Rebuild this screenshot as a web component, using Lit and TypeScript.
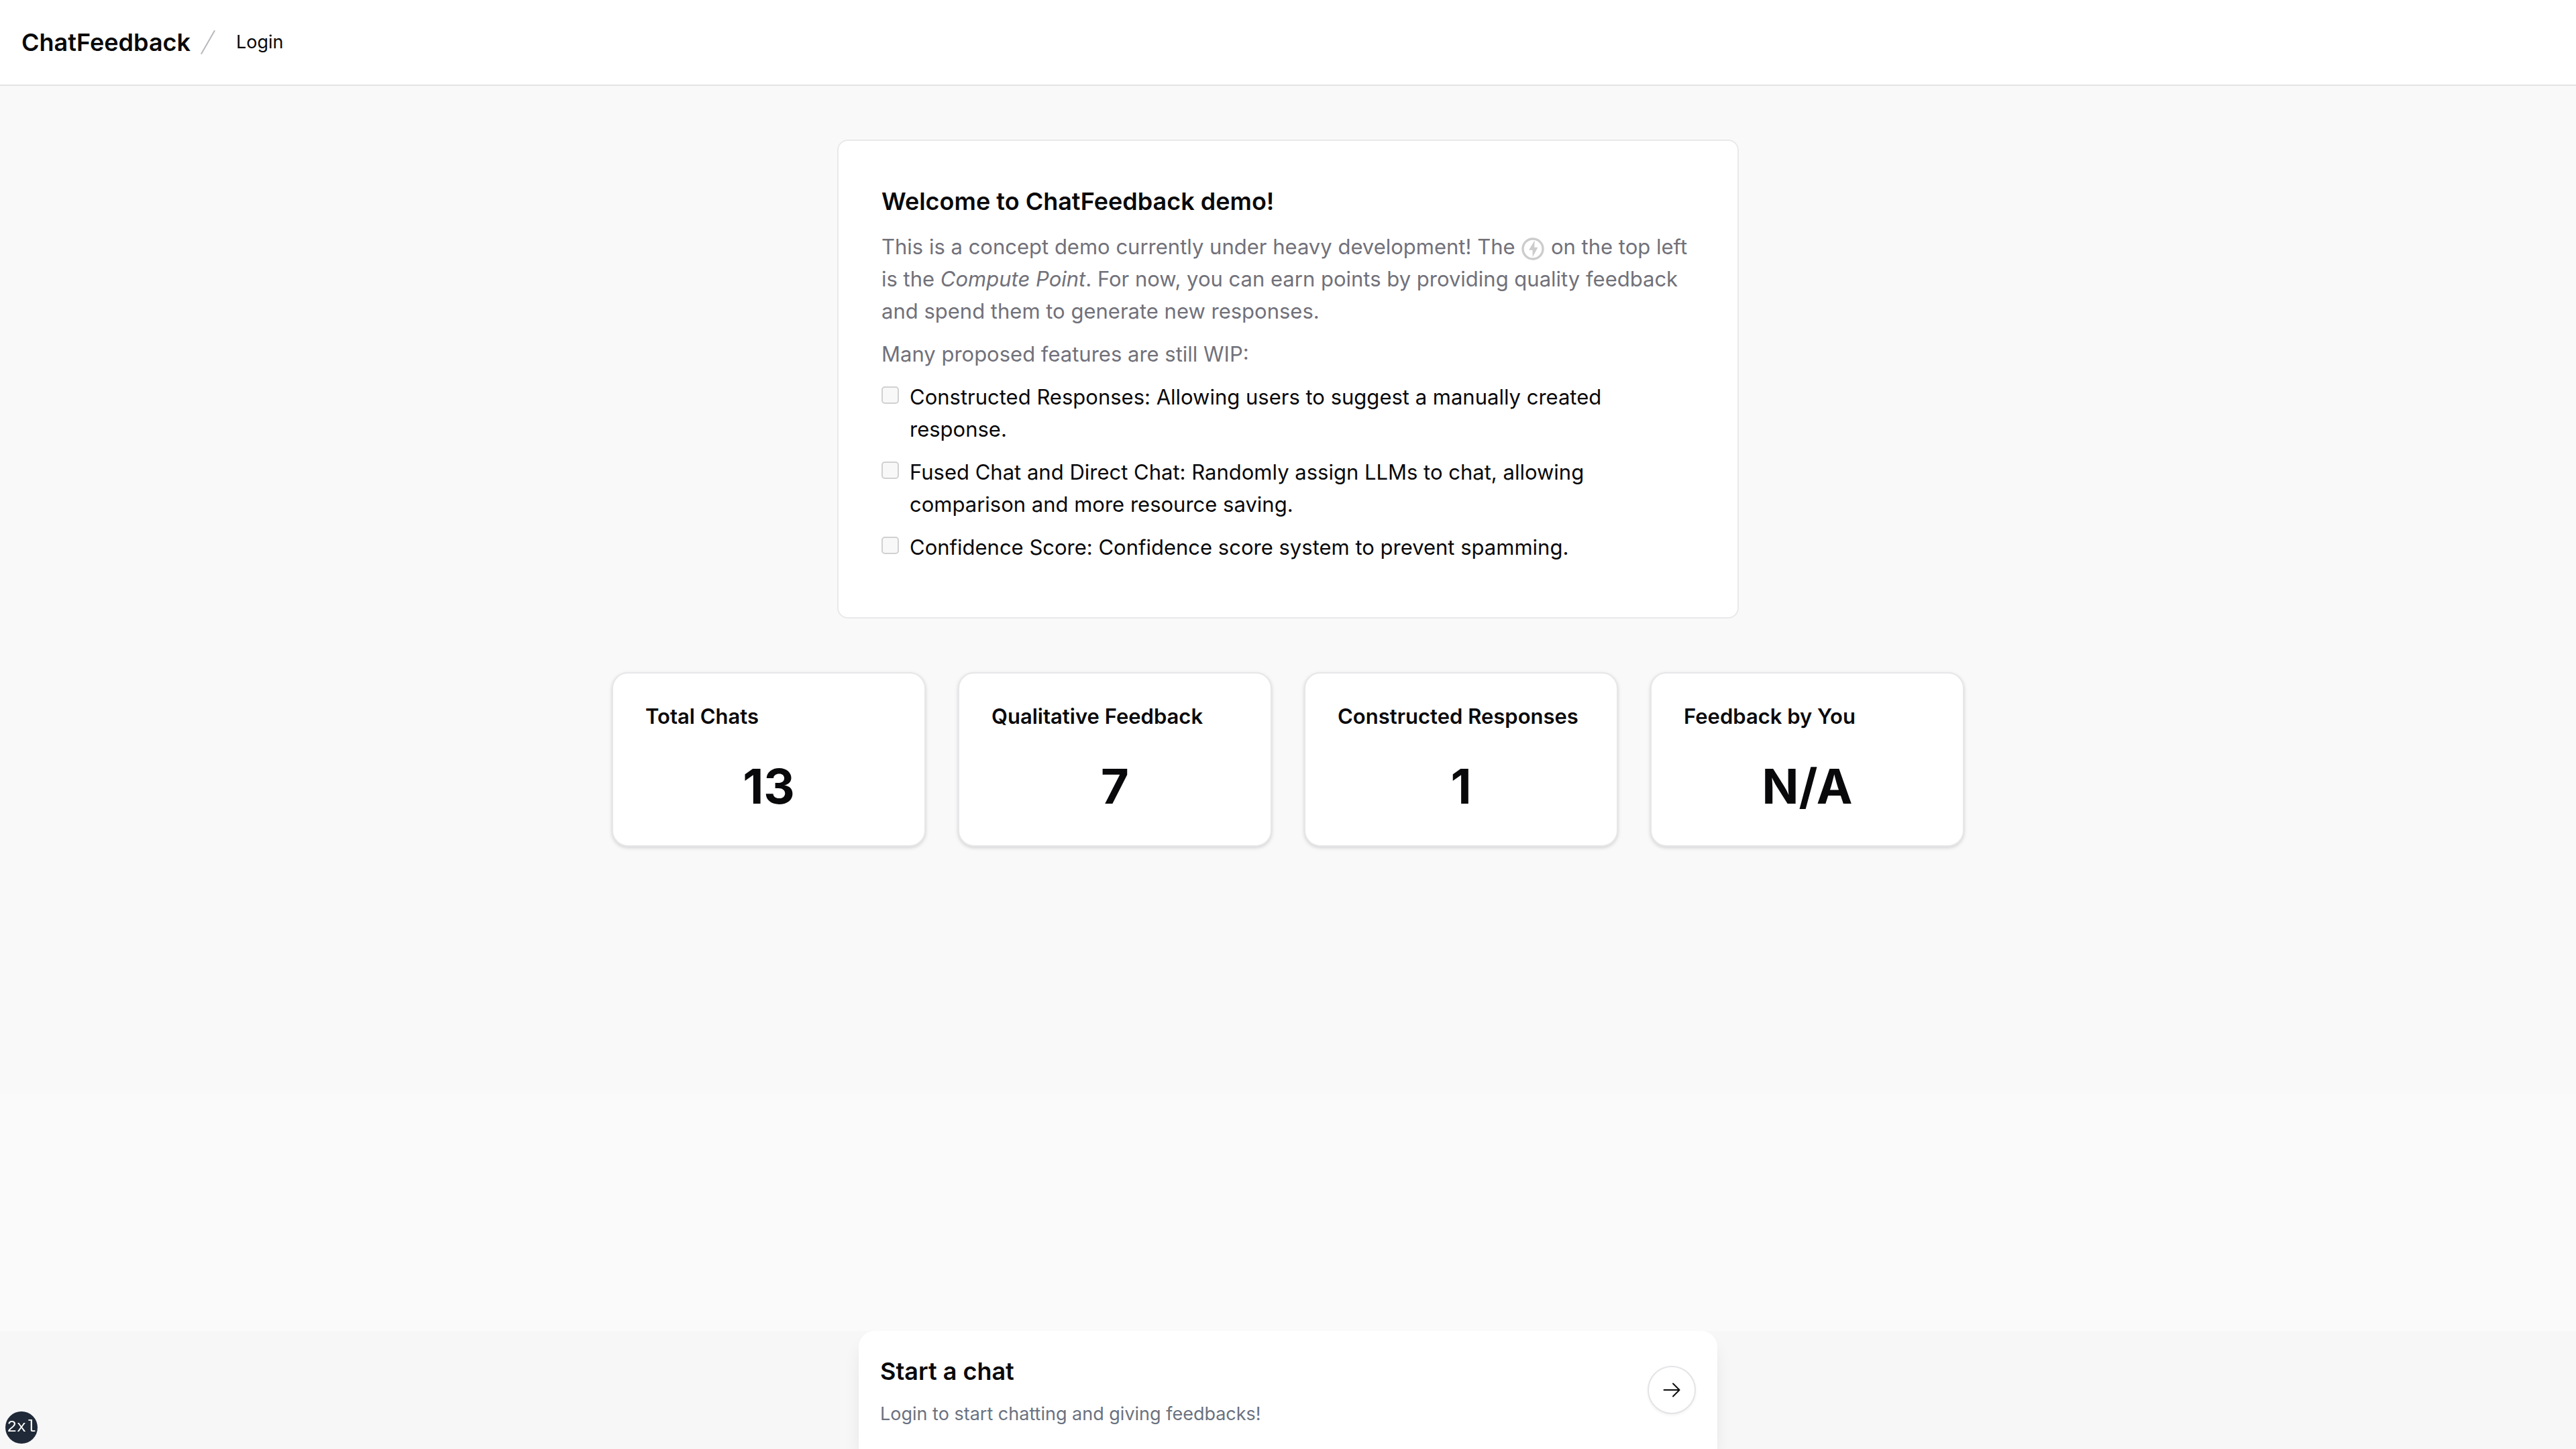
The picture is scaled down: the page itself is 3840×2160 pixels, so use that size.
import { LitElement, html, css } from "lit";
import { customElement, property } from "lit/decorators.js";

const features = [
  "Constructed Responses: Allowing users to suggest a manually created response.",
  "Fused Chat and Direct Chat: Randomly assign LLMs to chat, allowing comparison and more resource saving.",
  "Confidence Score: Confidence score system to prevent spamming.",
];

const stats = [
  { label: "Total Chats", value: "13" },
  { label: "Qualitative Feedback", value: "7" },
  { label: "Constructed Responses", value: "1" },
  { label: "Feedback by You", value: "N/A" },
];

@customElement("stat-card")
export class StatCard extends LitElement {
  @property() label = "";
  @property() value = "";

  static styles = css`
    :host {
      display: block;
      box-sizing: border-box;
      padding: 40px 48px 32px;
      background: #ffffff;
      border: 2px solid #e7e7e9;
      border-radius: 24px;
      box-shadow: 0 2px 6px rgba(0, 0, 0, 0.1), 0 2px 4px rgba(0, 0, 0, 0.06);
    }
    .label {
      margin: 0;
      font-size: 31px;
      line-height: 48px;
      font-weight: 600;
      white-space: nowrap;
    }
    .value {
      margin: 24px 0 0;
      font-size: 72px;
      line-height: 80px;
      padding: 16px 0;
      font-weight: 700;
      text-align: center;
    }
  `;

  render() {
    return html`
      <h2 class="label">${this.label}</h2>
      <p class="value">${this.value}</p>
    `;
  }
}

@customElement("app-root")
export class AppRoot extends LitElement {
  static styles = css`
    :host {
      display: flex;
      flex-direction: column;
      min-height: 100vh;
      background: #f9f9f9;
      color: #09090b;
      font-family: Inter, "Liberation Sans", sans-serif;
    }
    .header {
      display: flex;
      align-items: center;
      box-sizing: border-box;
      height: 128px;
      padding: 0 32px;
      background: #ffffff;
      border-bottom: 2px solid #e4e4e7;
    }
    .brand {
      font-size: 36px;
      line-height: 56px;
      font-weight: 600;
      color: inherit;
      text-decoration: none;
    }
    .separator {
      width: 48px;
      height: 48px;
      margin: 0 2px;
      color: #b8b8bd;
    }
    .login {
      padding: 0 16px;
      font-size: 27px;
      line-height: 40px;
      color: inherit;
      text-decoration: none;
    }
    .main {
      flex: 1;
      display: flex;
      flex-direction: column;
      align-items: center;
      gap: 80px;
      padding: 80px 32px;
      background: linear-gradient(#f9f9f9 81%, #fafafa 81%);
    }
    .welcome {
      box-sizing: border-box;
      width: 100%;
      max-width: 1344px;
      padding: 64px;
      background: #ffffff;
      border: 2px solid #e9e9eb;
      border-radius: 16px;
      font-size: 31px;
      line-height: 48px;
    }
    .title {
      margin: 0 0 18px;
      font-size: 36px;
      line-height: 52px;
      font-weight: 600;
    }
    .text {
      margin: 0 0 16px;
      color: #71717a;
    }
    .bolt {
      width: 36px;
      height: 36px;
      vertical-align: -10px;
      color: #cccccc;
    }
    .features {
      display: flex;
      flex-direction: column;
      gap: 16px;
      margin: 0;
      padding: 0 0 16px;
      list-style: none;
    }
    .feature {
      display: flex;
      align-items: flex-start;
      gap: 16px;
    }
    .check {
      appearance: none;
      flex: none;
      box-sizing: border-box;
      width: 26px;
      height: 26px;
      margin: 8px 0 0;
      background: #f8f8f8;
      border: 2px solid #d1d1d1;
      border-radius: 5px;
    }
    .stats {
      display: grid;
      grid-template-columns: repeat(4, minmax(0, 1fr));
      gap: 48px;
      width: 100%;
      max-width: 2016px;
    }
    .dock {
      display: flex;
      justify-content: center;
      background: #f7f7f8;
    }
    .start {
      display: flex;
      align-items: center;
      justify-content: space-between;
      box-sizing: border-box;
      width: 100%;
      max-width: 1280px;
      padding: 32px;
      background: #ffffff;
      border-radius: 24px 24px 0 0;
      box-shadow: 0 20px 30px -6px rgba(0, 0, 0, 0.1), 0 8px 12px -8px rgba(0, 0, 0, 0.1);
      clip-path: inset(0 -64px 0 -64px);
    }
    .start-title {
      margin: 0 0 16px;
      font-size: 36px;
      line-height: 56px;
      font-weight: 600;
    }
    .start-text {
      margin: 0;
      font-size: 27px;
      line-height: 40px;
      color: #6b7280;
    }
    .go {
      display: flex;
      align-items: center;
      justify-content: center;
      box-sizing: border-box;
      width: 72px;
      height: 72px;
      padding: 0;
      color: #09090b;
      background: #ffffff;
      border: 2px solid #e4e4e7;
      border-radius: 50%;
      box-shadow: 0 2px 4px rgba(0, 0, 0, 0.05);
    }
    .arrow {
      width: 32px;
      height: 32px;
    }
    .badge {
      position: fixed;
      left: 8px;
      bottom: 8px;
      display: flex;
      align-items: center;
      justify-content: center;
      width: 48px;
      height: 48px;
      border-radius: 50%;
      background: #1f2937;
      color: #ffffff;
      font-family: "Liberation Mono", monospace;
      font-size: 24px;
      line-height: 32px;
    }
  `;

  render() {
    return html`
      <header class="header">
        <a class="brand" href="#">ChatFeedback</a>
        <svg class="separator" viewBox="0 0 24 24" fill="none" stroke="currentColor" stroke-linecap="round" aria-hidden="true">
          <path d="M16.88 3.549L7.12 20.451" />
        </svg>
        <a class="login" href="#login">Login</a>
      </header>
      <main class="main">
        <section class="welcome">
          <h1 class="title">Welcome to ChatFeedback demo!</h1>
          <p class="text">
            This is a concept demo currently under heavy development! The
            <svg class="bolt" viewBox="0 0 36 36" aria-hidden="true">
              <circle cx="18" cy="18" r="15" fill="none" stroke="currentColor" stroke-width="3.4" />
              <path d="M20.7 5.3 L12 19.8 H17.6 V30.3 L25.4 15.8 H20.2 Z" fill="currentColor" />
            </svg>
            on the top left is the <em>Compute Point</em>. For now, you can earn points by
            providing quality feedback and spend them to generate new responses.
          </p>
          <p class="text">Many proposed features are still WIP:</p>
          <ul class="features">
            ${features.map(
              (text, i) => html`
                <li class="feature">
                  <input class="check" type="checkbox" id="feature-${i}" disabled />
                  <label for="feature-${i}">${text}</label>
                </li>
              `
            )}
          </ul>
        </section>
        <section class="stats">
          ${stats.map((s) => html`<stat-card .label=${s.label} .value=${s.value}></stat-card>`)}
        </section>
      </main>
      <footer class="dock">
        <section class="start">
          <div>
            <h2 class="start-title">Start a chat</h2>
            <p class="start-text">Login to start chatting and giving feedbacks!</p>
          </div>
          <button class="go" type="button" aria-label="Start a chat">
            <svg class="arrow" viewBox="0 0 32 32" fill="none" stroke="currentColor" stroke-width="2" stroke-linecap="round" stroke-linejoin="round" aria-hidden="true">
              <path d="M4.5 16H27.5M18 6.5L27.5 16L18 25.5" />
            </svg>
          </button>
        </section>
      </footer>
      <div class="badge">2xl</div>
    `;
  }
}
